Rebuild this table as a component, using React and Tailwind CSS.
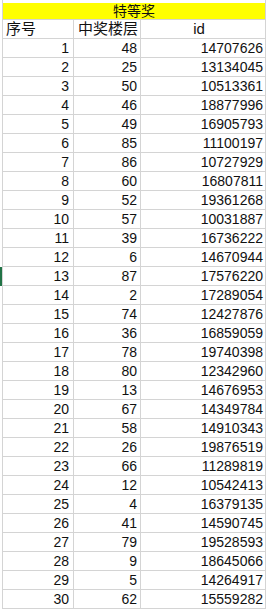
import React from 'react'

const rows = [
  [1, 48, 14707626], [2, 25, 13134045], [3, 50, 10513361], [4, 46, 18877996],
  [5, 49, 16905793], [6, 85, 11100197], [7, 86, 10727929], [8, 60, 16807811],
  [9, 52, 19361268], [10, 57, 10031887], [11, 39, 16736222], [12, 6, 14670944],
  [13, 87, 17576220], [14, 2, 17289054], [15, 74, 12427876], [16, 36, 16859059],
  [17, 78, 19740398], [18, 80, 12342960], [19, 13, 14676953], [20, 67, 14349784],
  [21, 58, 14910343], [22, 26, 19876519], [23, 66, 11289819], [24, 12, 10542413],
  [25, 4, 16379135], [26, 41, 14590745], [27, 79, 19528593], [28, 9, 18645066],
  [29, 5, 14264917], [30, 62, 15559282],
]

const font = { fontFamily: '"Liberation Sans", "Noto Sans CJK SC", sans-serif' }

const Row = ({ active, children }) => (
  <div className="flex h-[19px]">
    <div className={active ? 'w-[2px] bg-[#217346]' : 'w-[2px]'} />
    <div className="grid grid-cols-[71px_67px_125px] border-l border-b border-[#d4d4d4]">
      {children}
    </div>
  </div>
)

const cell = 'border-r border-[#d4d4d4] flex items-end pb-[1px] text-[14px] leading-[16px] text-[#111]'

export default function App() {
  return (
    <div className="w-[268px] h-[611px] bg-white overflow-hidden" style={font}>
      <div className="flex h-[20px]">
        <div className="w-[2px]" />
        <div className="w-[264px] border-l border-r border-b border-[#d4d4d4] pt-[3px]">
          <div className="h-[16px] bg-[#ffff00] flex items-end justify-center text-[14px] leading-[16px] text-[#111]">
            特等奖
          </div>
        </div>
      </div>
      <Row>
        <div className={cell + ' pl-[3px] text-[15px]'}>序号</div>
        <div className={cell + ' pl-[4px] text-[15px]'}>中奖楼层</div>
        <div className={cell + ' justify-center pr-[8px] text-[15px]'}>id</div>
      </Row>
      {rows.map(([n, floor, id]) => (
        <Row key={n} active={n === 13}>
          <div className={cell + ' justify-end pr-[4px]'}>{n}</div>
          <div className={cell + ' justify-end pr-[3px]'}>{floor}</div>
          <div className={cell + ' justify-end pr-[2px]'}>{id}</div>
        </Row>
      ))}
    </div>
  )
}
